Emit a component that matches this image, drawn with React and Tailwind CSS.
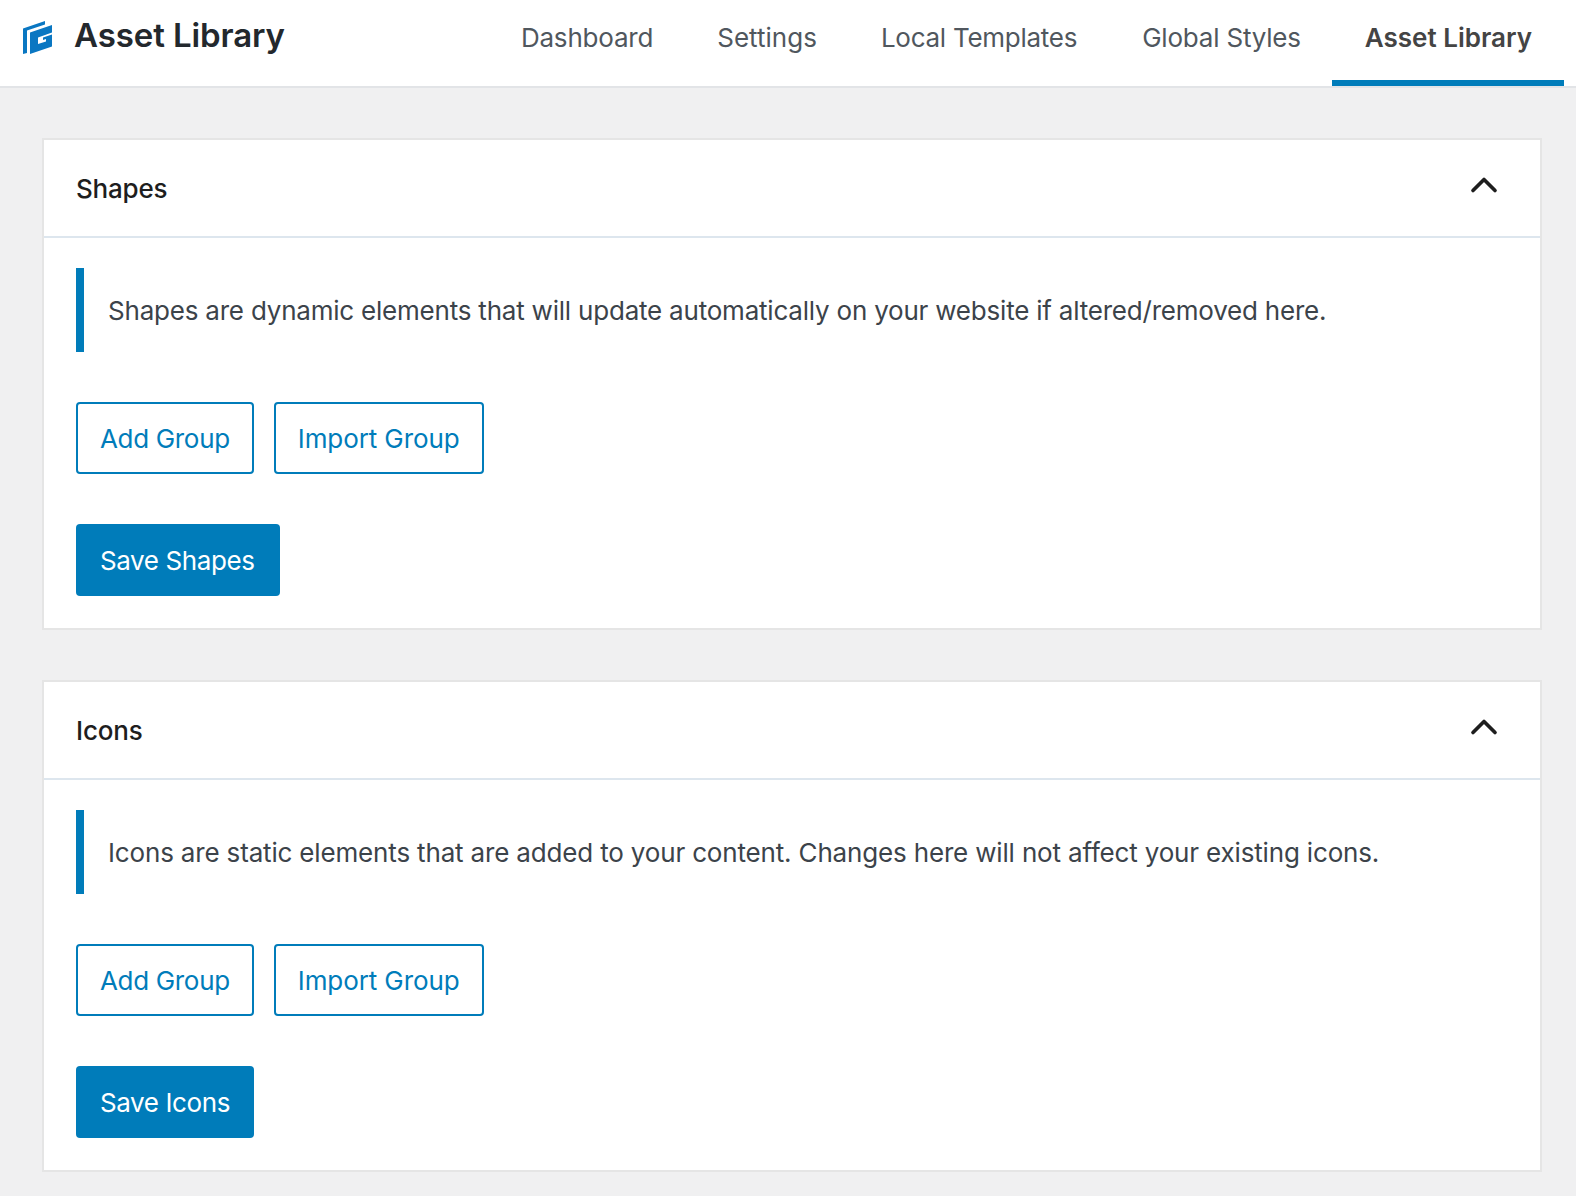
import React from 'react';
import { ChevronUp } from 'lucide-react';

const tabs = [
  { label: 'Dashboard', cls: 'h-full px-8 pb-[6px] flex items-center border-b-[6px] border-transparent text-[26px] tracking-[-0.2px] text-[#50575e]' },
  { label: 'Settings', cls: 'h-full px-8 pb-[6px] flex items-center border-b-[6px] border-transparent text-[26px] tracking-[0.02px] text-[#50575e]' },
  { label: 'Local Templates', cls: 'h-full pl-8 pr-[33px] pb-[6px] flex items-center border-b-[6px] border-transparent text-[26px] tracking-[-0.27px] text-[#50575e]' },
  { label: 'Global Styles', cls: 'h-full pl-8 pr-[31px] pb-[6px] flex items-center border-b-[6px] border-transparent text-[26px] tracking-[-0.2px] text-[#50575e]' },
  { label: 'Asset Library', cls: 'h-full pl-[33px] pr-8 pb-[6px] flex items-center border-b-[6px] border-[#007cba] text-[26px] font-semibold text-[#444]' },
];

const Logo = () => (
  <svg viewBox="0 0 30 34" className="w-[30px] h-[34px] ml-[23px] -mt-[12px] shrink-0">
    <path fill="#0a77c2" d="M0 8.500 22 1v3.500L4 10.500V33l-4 1z" />
    <path fill="#0a77c2" fillRule="evenodd" d="M7 12.500 29 5v7.500l-14 5v6.500l8-2.500v-2.500l-3 1v-2.500l9-3V26.500L7 34z" />
  </svg>
);

const Section = ({ title, text, textCls, saveLabel, saveCls }) => (
  <section className="bg-white border-2 border-[#e5e5e5] mb-[50px] last:mb-6">
    <div className="h-[98px] px-8 flex items-center justify-between border-b-2 border-[#dde6ee]">
      <h2 className="text-[26px] font-medium tracking-[-0.2px] text-[#1e1e1e]">{title}</h2>
      <ChevronUp size={44} strokeWidth={2} className="text-[#1e1e1e] mr-[2px] -mt-[6px]" />
    </div>
    <div className="px-8 pt-[30px] pb-8">
      <p className={textCls}>{text}</p>
      <div className="flex gap-5 mt-[50px]">
        <button className="h-[72px] px-[22px] pt-px border-2 border-[#007cba] rounded-[4px] text-[26px] tracking-[-0.33px] text-[#007cba]">Add Group</button>
        <button className="h-[72px] px-[22px] pt-px border-2 border-[#007cba] rounded-[4px] text-[26px] tracking-[-0.1px] text-[#007cba]">Import Group</button>
      </div>
      <button className={saveCls}>{saveLabel}</button>
    </div>
  </section>
);

export default function App() {
  return (
    <div className="min-h-[1196px] bg-[#f0f0f1] font-['Inter',sans-serif]">
      <header className="h-[88px] bg-white border-b-2 border-[#e2e4e7] flex items-center justify-between">
        <div className="flex items-center">
          <Logo />
          <h1 className="ml-[21px] text-[33px] font-semibold tracking-[-0.1px] text-[#23282d] -mt-[14px]">Asset Library</h1>
        </div>
        <nav className="flex h-full mr-3">
          {tabs.map((tab) => (
            <a key={tab.label} className={tab.cls}>{tab.label}</a>
          ))}
        </nav>
      </header>
      <main className="ml-[42px] mr-[34px] pt-[50px]">
        <Section
          title="Shapes"
          saveLabel="Save Shapes"
          saveCls="block h-[72px] pl-6 pr-[25px] pt-px mt-[50px] bg-[#007cba] rounded-[4px] text-[26px] tracking-[-0.4px] text-white"
          textCls="h-[84px] border-l-8 border-[#007cba] pl-6 pt-px flex items-center text-[26px] tracking-[-0.21px] text-[#3c434a]"
          text="Shapes are dynamic elements that will update automatically on your website if altered/removed here."
        />
        <Section
          title="Icons"
          saveLabel="Save Icons"
          saveCls="block h-[72px] px-6 pt-px mt-[50px] bg-[#007cba] rounded-[4px] text-[26px] tracking-[-0.4px] text-white"
          textCls="h-[84px] border-l-8 border-[#007cba] pl-6 pt-px flex items-center text-[26px] tracking-[-0.165px] text-[#3c434a]"
          text="Icons are static elements that are added to your content. Changes here will not affect your existing icons."
        />
      </main>
    </div>
  );
}
